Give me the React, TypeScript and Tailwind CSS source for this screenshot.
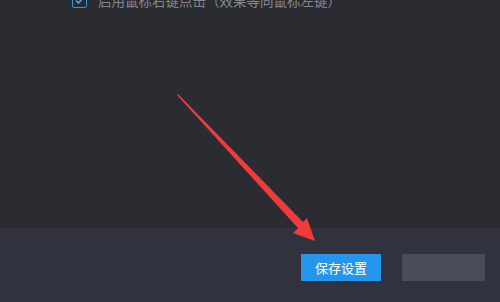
import React from "react";

export default function App() {
  return (
    <div
      className="relative w-[500px] h-[302px] overflow-hidden flex flex-col bg-[#2a2c31]"
      style={{ fontFamily: '"Noto Sans CJK SC", "Noto Sans", sans-serif' }}
    >
      <div className="flex-1">
        <div className="flex items-center mt-[-7px] pl-[72px] h-[15px]">
          <div className="w-[15px] h-[15px] border border-[#3d8fd6] rounded-[2px] flex items-center justify-center bg-[#262a33]">
            <svg width="11" height="11" viewBox="0 0 10 10">
              <path d="M1.8 5.2 L4 7.3 L8.3 2.6" stroke="#4aa0ef" strokeWidth="1.6" fill="none" />
            </svg>
          </div>
          <span className="ml-[11px] text-[13.5px] leading-[15px] text-[#868890] whitespace-nowrap">
            启用鼠标右键点击（效果等同鼠标左键）
          </span>
        </div>
      </div>
      <div className="h-[74px] bg-[#30323d] flex items-center justify-end pr-[15px] gap-[21px] pt-[5px]">
        <button className="w-[80px] h-[27px] bg-[#2496ed] text-white text-[13px] flex items-center justify-center">
          保存设置
        </button>
        <button className="w-[83px] h-[27px] bg-[#4a4d57]"></button>
      </div>
      <svg className="absolute left-0 top-0 pointer-events-none" width="500" height="302" viewBox="0 0 500 302">
        <polygon
          points="177,95 178,94 303,222 307,218 315,241 293,233 298,228"
          fill="#f23a3a"
        />
      </svg>
    </div>
  );
}
